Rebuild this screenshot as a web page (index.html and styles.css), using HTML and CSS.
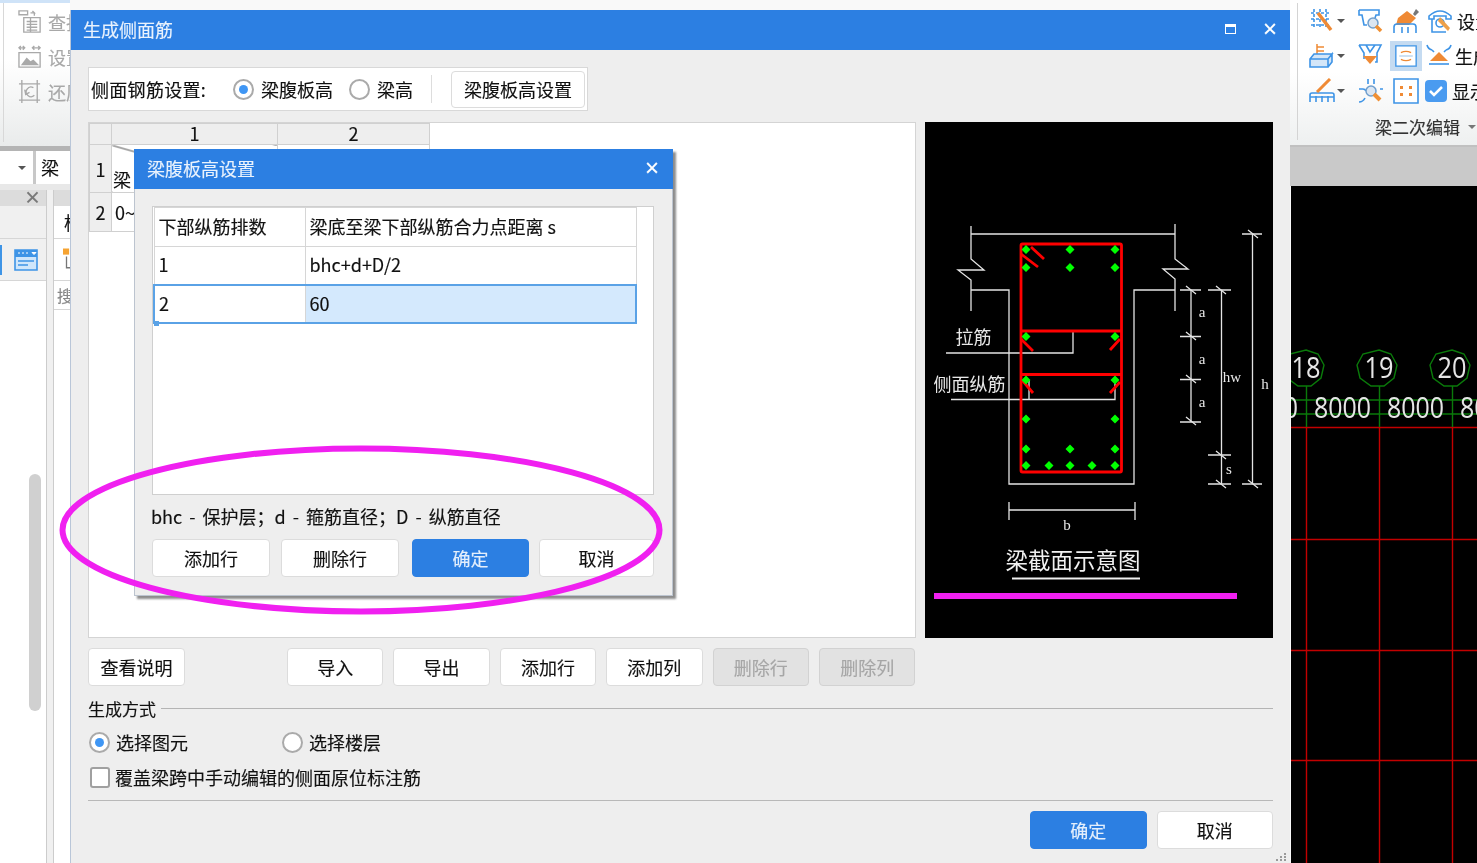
FILE: index.html
```html
<!DOCTYPE html>
<html lang="zh-CN">
<head>
<meta charset="utf-8">
<title>生成侧面筋</title>
<link rel="stylesheet" href="styles.css">
</head>
<body>
<div class="stage">

  <div class="app-left">
    <div class="rib-left">
      <div class="rib-left-item">
        <svg class="ic" viewBox="0 0 26 26"><path d="M1 2h9v4H1zM13 4h4l-2-2M17 4v3M6 9h17v15H6zM9 13h11M9 16h11M9 19h11M9 22h11M13 9v15" class="g"/></svg>
        <span>查找</span>
      </div>
      <div class="rib-left-item">
        <svg class="ic" viewBox="0 0 26 26"><path d="M1 4h6M3 2L1 4l2 2M5 2l2 2-2 2M15 4h8M17 2l-2 2 2 2M21 2l2 2-2 2M1 9h22v15H1z" class="g"/><path d="M3 22l6-8 4 4 3-2 6 6z" class="gf"/></svg>
        <span>设置</span>
      </div>
      <div class="rib-left-item">
        <svg class="ic" viewBox="0 0 26 26"><path d="M1 5h22M1 22h22M4 1v24M20 1v24M16 9a5 5 0 1 0 1 8M7 11l1 5 4-2" class="g"/></svg>
        <span>还原</span>
      </div>
    </div>
    <div class="left-rule"></div>
    <div class="left-select">
      <div class="left-combo"><i class="caret"></i></div>
      <div class="left-cell">梁</div>
    </div>
    <div class="left-gap"></div>
    <div class="left-panels">
      <div class="panel-a">
        <div class="panel-head"><span class="close-x">×</span></div>
        <div class="panel-row"></div>
        <div class="panel-row icon-row">
          <i class="sel-mark"></i>
          <svg class="ic-list" viewBox="0 0 24 24"><path d="M1 2h22v20H1z" fill="#cfe6fb" stroke="#3e94e6" stroke-width="1.6"/><path d="M1 2h22v7H1z" fill="#3e94e6"/><path d="M4 5h2M8 5h2M12 5h2M18 4.500h4l-2 2z" stroke="#fff" fill="#fff"/><path d="M4 13h16M4 17h10" stroke="#3e94e6" stroke-width="1.500"/></svg>
        </div>
        <div class="scroll-thumb"></div>
      </div>
      <div class="panel-b">
        <div class="panel-head"></div>
        <div class="panel-row pb-name">构</div>
        <div class="panel-row pb-icon">
          <svg class="ic-small" viewBox="0 0 16 24"><rect x="0" y="0" width="7" height="7" fill="#f6a331"/><path d="M4 9v13h10" fill="none" stroke="#777" stroke-width="1.500"/></svg>
        </div>
        <div class="pb-search">搜</div>
      </div>
    </div>
  </div>

  <div class="app-right">
    <div class="rib-right">
      <div class="rib-grid">
        <div class="rib-line">
          <svg class="ri" viewBox="0 0 26 26"><path d="M2 5h20M2 11h20M2 17h20M5 1v20M11 1v20M17 1v20" class="b dash"/><path d="M9 5l13 17" stroke="#ef8a35" stroke-width="3.500" fill="none"/></svg><i class="caret"></i>
          <svg class="ri" viewBox="0 0 26 26"><path d="M1 2h20v5h-3l-1 3M1 2v5h3l2 10h3" class="b"/><circle cx="15" cy="15" r="5" fill="#dbe6f2" stroke="#6f9fce" stroke-width="1.500"/><path d="M18 18l5 5" stroke="#f09034" stroke-width="3.500"/></svg>
          <svg class="ri" viewBox="0 0 26 26"><path d="M20 6l3-5 3 3-4 4z" fill="#777"/><path d="M14 3l9 7-7 7H3l2-7z" fill="#ef8a35"/><path d="M1 25v-6q0-3 3-3h16q3 0 3 3v6M9 25v-6M15 25v-6" class="b"/></svg>
          <svg class="ri" viewBox="0 0 26 26"><path d="M1 8q11-10 22 0v3h-5V8H6v3H1zM4 11v13h14" class="b"/><circle cx="12" cy="15" r="4" class="b"/><path d="M12 9l10 11-2 3L10 13z" fill="#eda04a"/></svg>
          <span class="rt">设置</span>
        </div>
        <div class="rib-line">
          <svg class="ri" viewBox="0 0 26 26"><path d="M8 1v14M8 4h7M8 8h7M8 12h5" stroke="#ef8a35" stroke-width="1.500" fill="none"/><path d="M1 16l4-5h18l-4 5v8H1zM1 16h18l4-5v8l-4 5" class="b fill-light"/></svg><i class="caret"></i>
          <svg class="ri" viewBox="0 0 26 26"><path d="M1 2h22l-4 8v9h-2M1 2l5 8v6M8 2l4 7 5-7" class="b"/><path d="M5 13h14l-7 8z" fill="#ef8a35"/></svg>
          <span class="ri-active">
            <svg class="ri" viewBox="0 0 26 26"><path d="M1 1h24v24H1z" class="b fill-white"/><path d="M7 9q6-3 12 0M7 17q6 3 12 0" stroke="#ef8a35" stroke-width="1.500" fill="none"/><path d="M5 13h16" stroke="#9ec4e8" stroke-width="1.200"/></svg>
          </span>
          <svg class="ri" viewBox="0 0 26 26"><path d="M1 2q1 4 5 5M25 2q-1 4-5 5M6 7l2 2M20 7l-2 2" class="b"/><path d="M13 9l9 9H4z" fill="#ef8a35"/><path d="M3 21h20" stroke="#3e94e6" stroke-width="1.600"/></svg>
          <span class="rt">生成</span>
        </div>
        <div class="rib-line">
          <svg class="ri" viewBox="0 0 26 26"><path d="M1 24v-7q0-2 2-2h20q2 0 2 2v7M7 24v-6M13 24v-6M19 24v-6M1 19h24" class="b"/><path d="M8 14L21 1" stroke="#ef8a35" stroke-width="3"/></svg><i class="caret"></i>
          <svg class="ri" viewBox="0 0 26 26"><path d="M10 1v5M16 1v5M1 11h4q2 0 3 2M25 11h-3M1 24q4 0 6-4" class="b"/><circle cx="13" cy="13" r="5" fill="#dbe6f2" stroke="#6f9fce" stroke-width="1.500"/><path d="M16 16l6 6" stroke="#f09034" stroke-width="4"/></svg>
          <svg class="ri" viewBox="0 0 26 26"><path d="M1 1h24v24H1z" class="b fill-white"/><path d="M7 8h3v3H7zM16 8h3v3h-3zM7 15h3v3H7zM16 15h3v3h-3z" fill="#ef8a35"/></svg>
          <svg class="ri-check" viewBox="0 0 22 22"><rect x="0" y="0" width="22" height="22" rx="4" fill="#4a9bf0"/><path d="M5 11l4 4 8-8" fill="none" stroke="#fff" stroke-width="2.500"/></svg>
          <span class="rt tight">显示</span>
        </div>
      </div>
      <div class="rib-caption"><span>梁二次编辑</span><i class="caret"></i></div>
    </div>
    <div class="cad-strip"></div>
    <svg class="cad" viewBox="1291 186 186 677">
      <g class="cad-red">
        <path d="M1291 427.500H1477M1291 539.500H1477M1291 650.500H1477M1291 760.500H1477"/>
        <path d="M1306.500 427V863M1379.500 427V863M1452.500 427V863"/>
      </g>
      <g class="cad-green">
        <path d="M1291 400H1477M1291 414H1477M1306.500 386V427M1379.500 386V427M1452.500 386V427"/>
        <path d="M1306 350l12 4 6 11-3 13-10 8h-13l-11-8-3-13 6-11z"/>
        <path d="M1379 350l12 4 6 11-3 13-10 8h-13l-11-8-3-13 6-11z"/>
        <path d="M1452 350l12 4 6 11-3 13-10 8h-13l-11-8-3-13 6-11z"/>
      </g>
      <g class="cad-text">
        <text x="1306" y="378" class="cad-num" text-anchor="middle" textLength="29" lengthAdjust="spacingAndGlyphs">18</text>
        <text x="1379" y="378" class="cad-num" text-anchor="middle" textLength="29" lengthAdjust="spacingAndGlyphs">19</text>
        <text x="1452" y="378" class="cad-num" text-anchor="middle" textLength="29" lengthAdjust="spacingAndGlyphs">20</text>
        <text x="1241" y="418" class="cad-dim" textLength="57" lengthAdjust="spacingAndGlyphs">8000</text>
        <text x="1314" y="418" class="cad-dim" textLength="57" lengthAdjust="spacingAndGlyphs">8000</text>
        <text x="1387" y="418" class="cad-dim" textLength="57" lengthAdjust="spacingAndGlyphs">8000</text>
        <text x="1460" y="418" class="cad-dim" textLength="57" lengthAdjust="spacingAndGlyphs">8000</text>
      </g>
    </svg>
  </div>

  <section class="dialog main-dialog">
    <header class="titlebar">
      <span class="title">生成侧面筋</span>
      <span class="win-ctrl">
        <i class="win-max"></i>
        <span class="win-close">×</span>
      </span>
    </header>
    <div class="main-body">
      <div class="setting-box">
        <span class="setting-label">侧面钢筋设置:</span>
        <label class="opt opt-a"><i class="radio on"></i>梁腹板高</label>
        <label class="opt opt-b"><i class="radio"></i>梁高</label>
        <i class="vsep"></i>
        <button class="btn setting-btn">梁腹板高设置</button>
      </div>

      <div class="content-row">
        <div class="grid-box">
          <table class="sheet">
            <colgroup><col class="c0"><col class="c1"><col class="c2"></colgroup>
            <tr class="sheet-head"><th></th><th>1</th><th>2</th></tr>
            <tr class="sheet-r1"><th>1</th><td class="sheet-diag">梁</td><td></td></tr>
            <tr class="sheet-r2"><th>2</th><td>0~</td><td></td></tr>
          </table>
        </div>
        <div class="diagram">
          <svg class="diagram-svg" viewBox="925 122 348 516">
            <g class="d-white">
              <path d="M971 234H1175M971 226V259L984 270H958L971 280V311M1175 224V259L1188 269H1163L1175 279V311"/>
              <path d="M971 290H1009V484H1134V290H1175"/>
              <path d="M946 353H1073V331M951 399.500H1115V379M1029 399V380"/>
              <path d="M1191 290V422M1180 290H1201M1180 336.500H1201M1180 379.500H1201M1180 422H1201"/>
              <path d="M1221.500 290V484M1208 290H1231M1208 455H1231M1208 484H1231"/>
              <path d="M1252.500 234V484M1242 234H1262M1242 484H1262"/>
              <path d="M1009 510H1135M1009 502V520M1135 502V520"/>
              <path d="M1186 286l10 8M1186 332l10 8M1186 375l10 8M1186 417l10 8M1216 286l10 8M1216 451l10 8M1216 480l10 8M1248 230l10 8M1248 480l10 8"/>
            </g>
            <g class="d-red">
              <rect x="1021" y="244" width="100.500" height="228" rx="1.500"/>
              <path d="M1021 331H1121M1021 374.500H1121"/>
              <path d="M1031 247L1044 259M1021 254L1038 267M1021 339L1033 351M1120 339L1110 350M1022 380L1033 393M1120 382L1110 393"/>
            </g>
            <g class="d-green">
              <path d="M1026 245l4.500 4.500-4.500 4.500-4.500-4.500zM1070 245l4.500 4.500-4.500 4.500-4.500-4.500zM1115 245l4.500 4.500-4.500 4.500-4.500-4.500z"/>
              <path d="M1026 263l4.500 4.500-4.500 4.500-4.500-4.500zM1070 263l4.500 4.500-4.500 4.500-4.500-4.500zM1115 263l4.500 4.500-4.500 4.500-4.500-4.500z"/>
              <path d="M1026 332l4.500 4.500-4.500 4.500-4.500-4.500zM1115 332l4.500 4.500-4.500 4.500-4.500-4.500z"/>
              <path d="M1026 375.500l4.500 4.500-4.500 4.500-4.500-4.500zM1115 375.500l4.500 4.500-4.500 4.500-4.500-4.500z"/>
              <path d="M1026 414.500l4.500 4.500-4.500 4.500-4.500-4.500zM1115 414.500l4.500 4.500-4.500 4.500-4.500-4.500z"/>
              <path d="M1026 444.500l4.500 4.500-4.500 4.500-4.500-4.500zM1070 444.500l4.500 4.500-4.500 4.500-4.500-4.500zM1115 444.500l4.500 4.500-4.500 4.500-4.500-4.500z"/>
              <path d="M1026 461l4.500 4.500-4.500 4.500-4.500-4.500zM1049 461l4.500 4.500-4.500 4.500-4.500-4.500zM1070 461l4.500 4.500-4.500 4.500-4.500-4.500zM1092 461l4.500 4.500-4.500 4.500-4.500-4.500zM1115 461l4.500 4.500-4.500 4.500-4.500-4.500z"/>
            </g>
            <g class="d-label">
              <text x="973.500" y="344" text-anchor="middle">拉筋</text>
              <text x="969.500" y="391" text-anchor="middle">侧面纵筋</text>
            </g>
            <g class="d-letter">
              <text x="1202" y="317" text-anchor="middle">a</text>
              <text x="1202" y="364" text-anchor="middle">a</text>
              <text x="1202" y="407" text-anchor="middle">a</text>
              <text x="1232" y="382" text-anchor="middle">hw</text>
              <text x="1265" y="389" text-anchor="middle">h</text>
              <text x="1229" y="474" text-anchor="middle">s</text>
              <text x="1067" y="530" text-anchor="middle">b</text>
            </g>
            <text x="1073" y="569" text-anchor="middle" class="d-title">梁截面示意图</text>
            <path d="M1012 578.500H1140" class="d-under"/>
            <rect x="934" y="593" width="303" height="6" class="d-mark"/>
          </svg>
        </div>
      </div>

      <div class="toolbar">
        <button class="btn tb-first">查看说明</button>
        <button class="btn tb">导入</button>
        <button class="btn tb">导出</button>
        <button class="btn tb">添加行</button>
        <button class="btn tb">添加列</button>
        <button class="btn tb" disabled>删除行</button>
        <button class="btn tb" disabled>删除列</button>
      </div>

      <div class="group-head"><span>生成方式</span><i></i></div>
      <div class="mode-row">
        <label class="opt mode"><i class="radio on"></i>选择图元</label>
        <label class="opt mode"><i class="radio"></i>选择楼层</label>
      </div>
      <label class="check-row"><i class="check"></i>覆盖梁跨中手动编辑的侧面原位标注筋</label>
      <div class="hr"></div>
      <div class="footer">
        <button class="btn primary foot">确定</button>
        <button class="btn foot">取消</button>
      </div>
    </div>
    <svg class="grip" viewBox="0 0 12 10"><path d="M9 1h2v2H9zM5 4h2v2H5zM9 4h2v2H9zM1 7h2v2H1zM5 7h2v2H5zM9 7h2v2H9z" fill="#9a9a9a"/></svg>
  </section>

  <section class="dialog sub-dialog">
    <header class="titlebar">
      <span class="title">梁腹板高设置</span>
      <span class="win-ctrl"><span class="win-close">×</span></span>
    </header>
    <div class="sub-body">
      <div class="sub-box">
        <table class="inner">
          <colgroup><col class="ic0"><col class="ic1"></colgroup>
          <tr><td>下部纵筋排数</td><td>梁底至梁下部纵筋合力点距离 s</td></tr>
          <tr><td>1</td><td>bhc+d+D/2</td></tr>
          <tr class="active"><td>2</td><td>60</td></tr>
        </table>
        <i class="handle"></i>
      </div>
      <p class="note">bhc - 保护层；d - 箍筋直径；D - 纵筋直径</p>
      <div class="sub-actions">
        <button class="btn">添加行</button>
        <button class="btn">删除行</button>
        <button class="btn primary">确定</button>
        <button class="btn">取消</button>
      </div>
    </div>
  </section>

  <svg class="annot" viewBox="0 0 1477 863"><ellipse cx="361" cy="530" rx="298.500" ry="81.500"/></svg>
</div>
</body>
</html>
```
FILE: styles.css
```css
* { box-sizing: border-box; }
html, body { margin: 0; padding: 0; width: 1477px; height: 863px; overflow: hidden; }
body { font-family: "Noto Sans CJK SC", "Noto Sans", sans-serif; color: #111; background: #f8f8f8; }
.stage { position: relative; width: 1477px; height: 863px; overflow: hidden; background: #f9f9f9; filter: blur(0.4px); -webkit-text-stroke: 0.15px; }

/* left app */
.app-left { position: absolute; left: 0; top: 0; width: 70px; height: 863px; display: flex; flex-direction: column; background: #f0f0f0; overflow: hidden; }
.rib-left { height: 146px; padding: 6px 0 0 18px; background: linear-gradient(#fff 40%, #e9ebeb); border-top: 3px solid #cfe3f8; position: relative; display: flex; flex-direction: column; gap: 10px; }
.rib-left::before { content: ""; position: absolute; left: 3px; top: 0; bottom: 4px; width: 1px; background: #d8d8d8; }
.rib-left-item { display: flex; align-items: center; gap: 5px; height: 25px; font-size: 18px; color: #a8a8a8; white-space: nowrap; }
.ic { width: 25px; height: 25px; flex: none; }
.g { fill: none; stroke: #a9a9a9; stroke-width: 1.400; }
.gf { fill: #a9a9a9; }
.left-rule { height: 5px; background: #b4b4b4; }
.left-select { height: 33px; display: flex; background: #c8c8c8; gap: 3px; }
.left-combo { width: 33px; background: #fff; display: flex; align-items: center; justify-content: flex-end; padding-right: 7px; }
.left-cell { flex: 1; background: #fff; font-size: 18px; padding-left: 5px; line-height: 32px; }
.caret { display: inline-block; width: 0; height: 0; border-left: 4px solid transparent; border-right: 4px solid transparent; border-top: 4px solid #555; }
.left-gap { height: 6px; background: #e8e8e8; }
.left-panels { flex: 1; display: flex; gap: 6px; min-height: 0; }
.panel-a { width: 47px; flex: none; background: #fff; border-right: 1px solid #ccc; }
.panel-b { flex: 1; min-width: 0; overflow: hidden; background: #fff; border-left: 1px solid #ccc; }
.panel-head { height: 16px; background: #dcdcdc; position: relative; }
.close-x { position: absolute; right: 5px; top: -5px; font-size: 17px; line-height: 24px; color: #777; font-weight: 700; }
.panel-row { height: 33px; background: #f0f0f0; border-bottom: 1px solid #d6d6d6; }
.icon-row { height: 42px; background: #f0f0f0; display: flex; align-items: center; justify-content: space-between; padding-right: 8px; }
.sel-mark { width: 2px; height: 30px; background: #3e94e6; }
.ic-list { width: 24px; height: 24px; }
.scroll-thumb { width: 12px; height: 237px; margin: 193px 0 0 29px; background: #d0d0d0; border-radius: 6px; }
.pb-name { font-size: 18px; line-height: 33px; padding-left: 10px; background: #fff; }
.pb-icon { height: 42px; background: #fff; padding: 8px 0 0 9px; }
.ic-small { width: 14px; height: 24px; }
.pb-search { font-size: 16px; color: #888; line-height: 28px; padding-left: 3px; border-bottom: 1px solid #d6d6d6; }

/* right app */
.app-right { position: absolute; left: 1290px; top: 0; width: 187px; height: 863px; display: flex; flex-direction: column; overflow: hidden; }
.rib-right { height: 147px; background: linear-gradient(#fff 50%, #eef0f0); border-bottom: 2px solid #c0c0c0; padding: 8px 0 0 19px; position: relative; overflow: hidden; }
.rib-right::before { content: ""; position: absolute; left: 7px; top: 3px; bottom: 5px; width: 1px; background: #d4d4d4; }
.rib-grid { display: flex; flex-direction: column; gap: 9px; width: 190px; }
.rib-line { display: flex; align-items: center; height: 26px; white-space: nowrap; }
.ri { width: 26px; height: 26px; flex: none; margin-right: 9px; }
.rib-line > .ri:first-child { margin-right: 2px; }
.rib-line > .caret { margin-right: 13px; flex: none; }
.b { fill: none; stroke: #3e94e6; stroke-width: 1.600; }
.fill-light { fill: #d4e6f8; }
.fill-white { fill: #fff; }
.dash { stroke-dasharray: 3 2; }
.ri-active { display: inline-flex; width: 32px; height: 30px; margin: -2px 4px -2px -3px; background: #c5dbf1; align-items: center; justify-content: center; flex: none; }
.ri-active .ri { margin: 0; width: 22px; height: 22px; }
.ri-check { width: 22px; height: 22px; margin-right: 4px; margin-left: -3px; flex: none; }
.rt { font-size: 18px; color: #111; margin-left: -6px; }
.rt.tight { margin-left: 1px; }
.rib-caption { position: absolute; left: 85px; top: 114px; width: 110px; font-size: 17px; color: #333; display: flex; align-items: center; gap: 8px; white-space: nowrap; }
.rib-caption .caret { border-top-color: #777; }
.cad-strip { height: 39px; background: #c9c9c9; flex: none; }
.cad { display: block; width: 186px; height: 677px; margin-left: 1px; background: #000; flex: none; }
.cad-red path { stroke: #c20000; stroke-width: 1.400; fill: none; }
.cad-green path { stroke: #0a7a0a; stroke-width: 1.400; fill: none; }
.cad-text text { fill: #e6e6e6; font-family: "Open Sans", sans-serif; }
.cad-num { font-size: 30px; }
.cad-dim { font-size: 29px; }

/* dialogs */
.dialog { position: absolute; background: #eee; display: flex; flex-direction: column; }
.main-dialog { left: 70px; top: 10px; width: 1220px; height: 853px; border-left: 1px solid #b9c6d8; }
.sub-dialog { left: 134px; top: 149px; width: 539px; height: 447px; border: 1px solid #bcc4cf; border-top: 0; box-shadow: 3px 3px 2px rgba(0,0,0,.45); }
.titlebar { height: 40px; flex: none; background: #2c7fe2; color: #e9f2fd; display: flex; align-items: center; justify-content: space-between; padding: 0 0 2px 12px; }
.sub-dialog .titlebar { margin: 0 -1px; padding-left: 13px; }
.title { font-size: 18px; }
.win-ctrl { display: flex; align-items: center; gap: 27px; padding-right: 13px; }
.sub-dialog .win-ctrl { padding-right: 14px; }
.win-max { width: 11px; height: 10px; border: 1px solid #fff; border-top-width: 3px; display: block; }
.win-close { font-size: 24px; line-height: 24px; color: #fff; font-family: "Liberation Sans", sans-serif; }

.main-body { flex: 1; display: flex; flex-direction: column; padding: 17px 17px 0 17px; }
.setting-box { width: 500px; height: 44px; flex: none; background: #fff; border: 1px solid #d8d8d8; display: flex; align-items: center; padding-left: 2px; font-size: 18px; white-space: nowrap; }
.setting-label { width: 142px; letter-spacing: 0.3px; padding-bottom: 1px; }
.opt { display: inline-flex; align-items: center; font-size: 18px; white-space: nowrap; line-height: 22px; }
.opt-a { gap: 7px; width: 116px; }
.opt-b { gap: 7px; }
.radio { display: inline-block; width: 21px; height: 21px; border-radius: 50%; background: #fff; border: 2px solid #aaa; flex: none; position: relative; }
.radio.on::after { content: ""; position: absolute; left: 4px; top: 4px; width: 9px; height: 9px; border-radius: 50%; background: #3f96f4; }
.vsep { width: 1px; height: 28px; background: #ddd; margin: 0 19px 0 18px; }
.btn { font: inherit; font-size: 18px; color: #111; background: #fff; border: 1px solid #dcdcdc; border-radius: 4px; padding: 0; height: 38px; white-space: nowrap; }
.btn.primary { background: #2c7fe2; border-color: #2c7fe2; color: #e4effc; }
.btn:disabled { background: #e2e2e2; border-color: #d2d2d2; color: #a6a6a6; }
.setting-btn { width: 134px; height: 37px; }

.content-row { display: flex; gap: 9px; margin-top: 11px; height: 516px; flex: none; }
.grid-box { width: 828px; background: #fff; border: 1px solid #d4d4d4; }
.sheet { border-collapse: collapse; table-layout: fixed; width: 340px; font-size: 18px; }
.c0 { width: 22px; } .c1 { width: 166px; } .c2 { width: 152px; }
.sheet th, .sheet td { border: 1px solid #d0d0d0; padding: 0; font-weight: 400; text-align: center; }
.sheet th { background: #eee; }
.sheet td { background: #fff; }
.sheet-head th { height: 21px; line-height: 16px; padding-bottom: 2px; }
.sheet-r1 th, .sheet-r1 td { height: 48px; }
.sheet-r2 th, .sheet-r2 td { height: 39px; }
.sheet td { text-align: left; padding-left: 3px; }
.sheet .sheet-diag { vertical-align: bottom; line-height: 24px; padding: 0 0 1px 1px; background: linear-gradient(to top right, transparent calc(50% - 1px), #555 50%, transparent calc(50% + 1px)), #fff; }
.diagram { width: 348px; background: #000; }
.diagram-svg { display: block; width: 348px; height: 516px; }
.d-white path { stroke: #e4e4e4; stroke-width: 1.300; fill: none; }
.d-red rect, .d-red path { stroke: #f00; stroke-width: 2.800; fill: none; }
.d-green path { fill: #0f0; }
.d-label text { fill: #e8e8e8; font-size: 18px; }
.d-letter text { fill: #e8e8e8; font-size: 15px; font-family: "Liberation Serif", serif; }
.d-title { fill: #f0f0f0; font-size: 22.500px; }
.d-under { stroke: #f0f0f0; stroke-width: 2; }
.d-mark { fill: #f020f0; }

.toolbar { display: flex; gap: 10px; margin-top: 10px; height: 38px; flex: none; }
.tb-first { width: 97px; margin-right: 92px; }
.tb { width: 96.400px; }
.group-head { display: flex; align-items: center; gap: 5px; margin-top: 10px; height: 24px; font-size: 17px; flex: none; }
.group-head i { flex: 1; height: 1px; background: #b4b4b4; }
.mode-row { display: flex; margin-top: 10px; height: 24px; padding-left: 1px; flex: none; }
.mode { width: 193px; gap: 6px; }
.check-row { display: flex; align-items: center; gap: 5px; margin-top: 11px; height: 24px; font-size: 18px; padding-left: 2px; flex: none; white-space: nowrap; }
.check { width: 20px; height: 21px; background: #fff; border: 2px solid #a0a0a0; border-radius: 3px; display: block; flex: none; }
.hr { height: 1px; background: #b8b8b8; margin-top: 11px; flex: none; }
.footer { display: flex; justify-content: flex-end; gap: 10px; margin-top: 10px; }
.foot { width: 116.500px; }
.grip { position: absolute; right: 3px; bottom: 1px; width: 12px; height: 10px; }

/* sub dialog */
.sub-body { flex: 1; display: flex; flex-direction: column; padding: 17px 18px 0 17px; }
.sub-box { position: relative; height: 289px; background: #fff; border: 1px solid #cfcfcf; flex: none; }
.inner { border-collapse: collapse; table-layout: fixed; width: 484px; font-size: 18px; }
.ic0 { width: 151px; }
.inner td { height: 38.500px; padding: 0 0 2px 4px; border: 1px solid #d6d6d6; }
.inner .active td { background: #d4e9fd; border-top: 2px solid #5aa2e6; border-bottom: 2px solid #5aa2e6; }
.inner .active td:first-child { background: #fff; border-left: 2px solid #5aa2e6; border-right: 1px solid #d6d6d6; }
.inner .active td:last-child { border-right: 2px solid #5aa2e6; }
.handle { position: absolute; left: 1px; top: 114px; width: 5px; height: 5px; background: #5aa2e6; }
.note { margin: 10px 0 0 -1px; height: 24px; line-height: 22px; font-size: 18px; white-space: nowrap; word-spacing: 3px; }
.sub-actions { display: flex; gap: 11px; margin-top: 10px; }
.sub-actions .btn { width: 118px; }
.sub-actions .primary { width: 117px; margin-left: 2px; }
.sub-actions .btn:last-child { width: 115px; margin-left: -1px; }

.annot { position: absolute; left: 0; top: 0; width: 1477px; height: 863px; pointer-events: none; }
.annot ellipse { fill: none; stroke: #f020f0; stroke-width: 6; }
```
